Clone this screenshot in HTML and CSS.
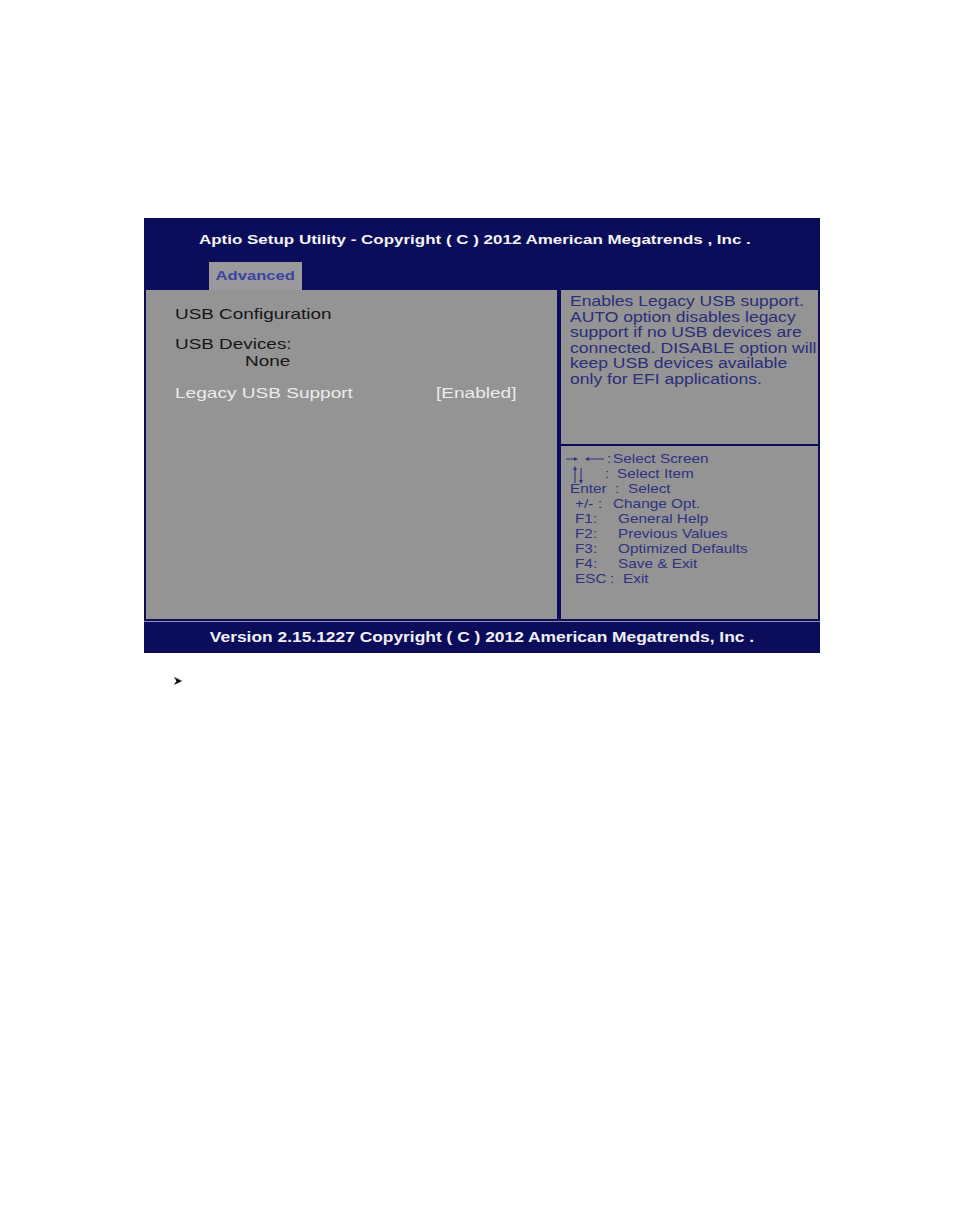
FILE: index.html
```html
<!DOCTYPE html>
<html>
<head>
<meta charset="utf-8">
<link rel="stylesheet" href="styles.css">
</head>
<body>
<div class="page">
  <div class="bios">
    <div class="header">
      <div class="title"><span class="sx">Aptio Setup Utility - Copyright ( C ) 2012 American Megatrends , Inc .</span></div>
      <div class="tabs"><div class="tab"><span class="sx-c">Advanced</span></div></div>
    </div>
    <div class="body">
      <div class="left">
        <div class="item"><span class="sx">USB Configuration</span></div>
        <div class="item gap"><span class="sx">USB Devices:</span></div>
        <div class="item indent"><span class="sx">None</span></div>
        <div class="item gap sel"><span class="label"><span class="sx">Legacy USB Support</span></span><span class="sx">[Enabled]</span></div>
      </div>
      <div class="right">
        <div class="help"><div class="sx-b">Enables Legacy USB support.<br>AUTO option disables legacy<br>support if no USB devices are<br>connected. DISABLE option will<br>keep USB devices available<br>only for EFI applications.</div></div>
        <div class="keys">
          <div class="key r1">
            <span class="a"><svg class="lr" width="40" height="8" viewBox="0 0 40 8"><path d="M0 4 H9" stroke="#2f3280" stroke-width="1"/><path d="M8 2 L12 4 L8 6 Z" fill="#2f3280"/><path d="M19 4 L23 2 L23 6 Z" fill="#2f3280"/><path d="M22 4 H38" stroke="#2f3280" stroke-width="1"/></svg></span>
            <span class="b"><span class="sx">:</span></span><span class="sx">Select Screen</span>
          </div>
          <div class="key r2">
            <span class="a"><svg class="ud" width="14" height="20" viewBox="0 0 14 20"><path d="M4 3 V17" stroke="#2f3280" stroke-width="1.1"/><path d="M2 4 L4 0 L6 4 Z" fill="#2f3280"/><path d="M10 2 V15" stroke="#2f3280" stroke-width="1.1"/><path d="M8 14 L10 18 L12 14 Z" fill="#2f3280"/></svg></span>
            <span class="b"><span class="sx">:</span></span><span class="sx">Select Item</span>
          </div>
          <div class="key r3">
            <span class="a"><span class="sx">Enter</span></span>
            <span class="b"><span class="sx">:</span></span><span class="sx">Select</span>
          </div>
          <div class="key r4">
            <span class="a"><span class="sx">+/-</span></span>
            <span class="b"><span class="sx">:</span></span><span class="sx">Change Opt.</span>
          </div>
          <div class="key r5">
            <span class="a"><span class="sx">F1</span></span>
            <span class="b"><span class="sx">:</span></span><span class="sx">General Help</span>
          </div>
          <div class="key r5">
            <span class="a"><span class="sx">F2</span></span>
            <span class="b"><span class="sx">:</span></span><span class="sx">Previous Values</span>
          </div>
          <div class="key r5">
            <span class="a"><span class="sx">F3</span></span>
            <span class="b"><span class="sx">:</span></span><span class="sx">Optimized Defaults</span>
          </div>
          <div class="key r5">
            <span class="a"><span class="sx">F4</span></span>
            <span class="b"><span class="sx">:</span></span><span class="sx">Save &amp; Exit</span>
          </div>
          <div class="key r6">
            <span class="a"><span class="sx">ESC</span></span>
            <span class="b"><span class="sx">:</span></span><span class="sx">Exit</span>
          </div>
        </div>
      </div>
    </div>
    <div class="footer"><span class="sx-c">Version 2.15.1227 Copyright ( C ) 2012 American Megatrends, Inc .</span></div>
  </div>
  <div class="bullet">
    <svg width="10" height="10" viewBox="0 0 10 10"><path d="M1 1 L9 5 L1 9 L3.5 5 Z" fill="#000"/><path d="M1 1 L9 5" stroke="#777" stroke-width="0.6"/></svg>
  </div>
</div>
</body>
</html>
```
FILE: styles.css
```css
html, body {
  margin: 0;
  padding: 0;
  background: #ffffff;
}
.page {
  padding: 218px 0 0 144px;
  font-family: "Liberation Sans", Arial, sans-serif;
}
.sx {
  display: inline-block;
  white-space: pre;
  transform: scaleX(1.26);
  transform-origin: 0 50%;
}
.sx-c {
  display: inline-block;
  white-space: pre;
  transform: scaleX(1.23);
  transform-origin: 50% 50%;
}
.sx-b {
  transform: scaleX(1.27);
  transform-origin: 0 50%;
  white-space: nowrap;
}
.bios {
  width: 676px;
  height: 435px;
  background: #0b0d5a;
  display: flex;
  flex-direction: column;
}
.header {
  height: 72px;
  display: flex;
  flex-direction: column;
  box-sizing: border-box;
  padding-top: 12px;
}
.title {
  color: #f4f4f8;
  font-weight: bold;
  font-size: 13.6px;
  padding-left: 55px;
  height: 20px;
  line-height: 20px;
}
.title .sx {
  transform: scaleX(1.248);
}
.tabs {
  margin-top: 12px;
  padding-left: 65px;
  display: flex;
  flex: 1;
}
.tab {
  width: 93px;
  background: #9a9a9c;
  color: #3a44a0;
  font-weight: bold;
  font-size: 13.5px;
  text-align: center;
  line-height: 28px;
}
.body {
  height: 331px;
  display: flex;
  padding: 0 2px 2px 2px;
  box-sizing: border-box;
}
.left {
  width: 411px;
  background: #949494;
  box-sizing: border-box;
  padding: 15px 0 0 29px;
  color: #161616;
  font-size: 15px;
}
.item {
  line-height: 17px;
  height: 17px;
}
.item.gap {
  margin-top: 13px;
}
.item.indent {
  padding-left: 70px;
}
.item.sel {
  margin-top: 15px;
  color: #ececec;
  display: flex;
}
.item.sel .sx {
  transform: scaleX(1.27);
}
.label {
  width: 261px;
}
.right {
  margin-left: 4px;
  width: 257px;
  display: flex;
  flex-direction: column;
}
.help {
  height: 154px;
  background: #949494;
  box-sizing: border-box;
  padding: 4px 0 0 9px;
  color: #2b2e78;
  font-size: 13.8px;
  line-height: 15.6px;
  overflow: hidden;
}
.keys {
  margin-top: 2px;
  flex: 1;
  background: #949494;
  box-sizing: border-box;
  padding: 5px 0 0 8px;
  color: #2f3280;
  font-size: 13px;
  line-height: 15px;
}
.keys .sx {
  transform: scaleX(1.18);
}
.key {
  display: flex;
  height: 15px;
}
.key .a, .key .b {
  display: inline-block;
  box-sizing: border-box;
  flex: none;
  position: relative;
}
.r1 .a { width: 38px; }
.r1 .b { width: 6px; }
.r2 .a { width: 36px; }
.r2 .b { width: 12px; }
.r3 .a { width: 46px; padding-left: 1px; }
.r3 .b { width: 13px; }
.r4 .a { width: 29px; padding-left: 6px; }
.r4 .b { width: 15px; }
.r5 .a { width: 24px; padding-left: 6px; }
.r5 .b { width: 25px; }
.r6 .a { width: 41px; padding-left: 6px; }
.r6 .b { width: 13px; }
.lr {
  display: block;
  margin-top: 4px;
  margin-left: -3px;
}
.ud {
  position: absolute;
  top: 0;
  left: 2px;
}
.footer {
  height: 32px;
  line-height: 31px;
  color: #f0f0f4;
  font-weight: bold;
  font-size: 13.8px;
  text-align: center;
  border-top: 1px solid #8d8fae;
  box-sizing: border-box;
}
.footer .sx-c {
  transform: scaleX(1.26);
}
.bullet {
  margin: 23px 0 0 29px;
  height: 10px;
  line-height: 0;
}
```
